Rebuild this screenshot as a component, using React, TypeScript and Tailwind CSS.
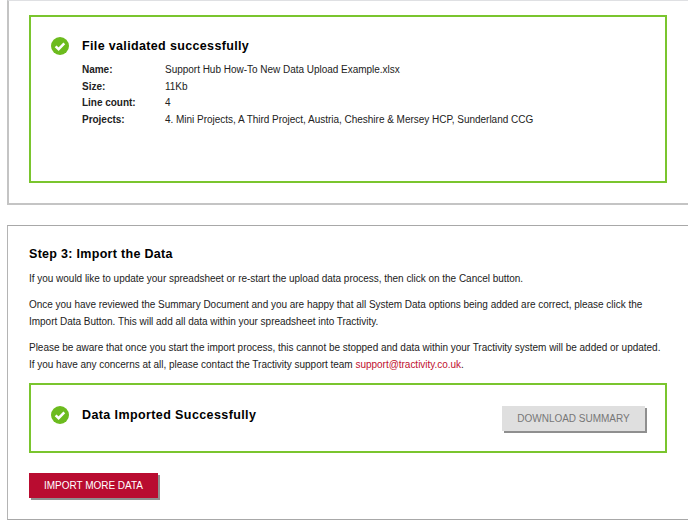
function CheckIcon() {
  return (
    <svg width="18" height="18" viewBox="0 0 18 18" className="shrink-0">
      <circle cx="9" cy="9" r="9" fill="#6cbb1e" />
      <path d="M4.6 9.3l3 2.9 5.7-5.8" fill="none" stroke="#fff" strokeWidth="2.5" />
    </svg>
  );
}

const fileInfo = [
  { label: 'Name:', value: 'Support Hub How-To New Data Upload Example.xlsx' },
  { label: 'Size:', value: '11Kb' },
  { label: 'Line count:', value: '4' },
  { label: 'Projects:', value: '4. Mini Projects, A Third Project, Austria, Cheshire & Mersey HCP, Sunderland CCG' },
];

export default function App() {
  return (
    <div className="h-[521px] w-[688px] overflow-hidden bg-white font-['Liberation_Sans',Arial,sans-serif] text-[10px] tracking-[-0.02px] text-[#222]">
      {/* Validation panel */}
      <div className="ml-[7px] h-[205px] w-[700px] border-t border-t-[#dfe0e3] border-b-2 border-b-[#c4c4c4] border-l-2 border-l-[#c4c4c4] pt-[14px] pl-[20px]">
        <div className="h-[168px] w-[638px] border-2 border-[#7ac52e] pt-[20px] pl-[20px]">
          <div className="flex items-center gap-[13px]">
            <CheckIcon />
            <h2 className="text-[12.5px] font-bold tracking-[0.35px] text-black">File validated successfully</h2>
          </div>
          <div className="mt-[5.6px] ml-[31px]">
            {fileInfo.map(row => (
              <div key={row.label} className="flex h-[16.5px] items-center">
                <span className="w-[83px] shrink-0 font-bold">{row.label}</span>
                <span>{row.value}</span>
              </div>
            ))}
          </div>
        </div>
      </div>

      {/* Step 3 panel */}
      <div className="mt-[20px] ml-[7px] h-[295px] w-[700px] border-t border-t-[#a8a8a8] border-b border-b-[#a8a8a8] border-l border-l-[#b4b4b4] pt-[20px] pl-[21px]">
        <h2 className="text-[12.5px] leading-[16px] font-bold tracking-[0.3px] text-black">Step 3: Import the Data</h2>
        <p className="mt-[8px] leading-[17px]">
          If you would like to update your spreadsheet or re-start the upload data process, then click on the Cancel button.
        </p>
        <p className="mt-[9px] w-[635px] leading-[17px]">
          Once you have reviewed the Summary Document and you are happy that all System Data options being added are correct, please click the Import Data Button. This will add all data within your spreadsheet into Tractivity.
        </p>
        <p className="mt-[9px] w-[636px] leading-[17px]">
          Please be aware that once you start the import process, this cannot be stopped and data within your Tractivity system will be added or updated. If you have any concerns at all, please contact the Tractivity support team <span className="text-[#c0102f]">support@tractivity.co.uk</span>.
        </p>
        <div className="mt-[10px] flex h-[70px] w-[638px] items-center justify-between border-2 border-[#7ac52e] pr-[20px] pl-[20px]">
          <div className="flex items-center gap-[13px] pb-[6px]">
            <CheckIcon />
            <span className="text-[12.5px] font-bold tracking-[0.4px] text-black">Data Imported Successfully</span>
          </div>
          <button className="flex h-[25px] w-[143px] items-center justify-center bg-[#dfdfdf] text-[#777] shadow-[2px_2px_0_#8f8f8f]">
            DOWNLOAD SUMMARY
          </button>
        </div>
        <button className="mt-[20px] flex h-[25px] w-[129px] items-center justify-center bg-[#b90c30] text-white shadow-[2px_2px_0_#8f8f8f]">
          IMPORT MORE DATA
        </button>
      </div>
    </div>
  );
}
